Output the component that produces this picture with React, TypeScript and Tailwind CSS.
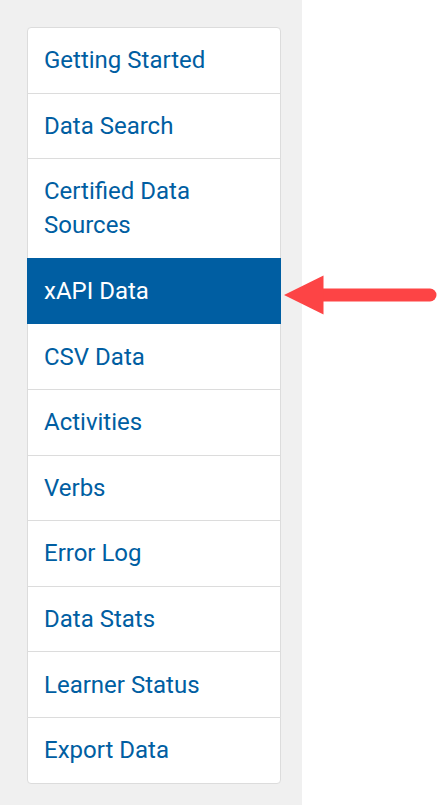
import React from "react";

const ITEMS = [
  "Getting Started",
  "Data Search",
  "Certified Data Sources",
  "xAPI Data",
  "CSV Data",
  "Activities",
  "Verbs",
  "Error Log",
  "Data Stats",
  "Learner Status",
  "Export Data",
];

const ACTIVE = "xAPI Data";

export default function App() {
  return (
    <div className="relative flex min-h-[805px] bg-white" style={{ fontFamily: "Roboto, 'Liberation Sans', sans-serif" }}>
      <aside className="w-[302px] shrink-0 bg-[#f0f0f0] pt-[27px] pl-[27px] pr-[21px] pb-6">
        <nav className="flex flex-col">
          {ITEMS.map((label, i) => (
            <NavItem key={label} label={label} active={label === ACTIVE} first={i === 0} last={i === ITEMS.length - 1} />
          ))}
        </nav>
      </aside>
      <div className="flex-1" />

      {/* annotation arrow pointing at the active item */}
      <svg className="pointer-events-none absolute left-0 top-0" width="438" height="805" viewBox="0 0 438 805">
        <line x1="318" y1="295" x2="430" y2="295" stroke="#fd4445" strokeWidth="13" strokeLinecap="round" />
        <polygon points="284,295 323.5,275.5 323.5,314.5" fill="#fd4445" />
      </svg>
    </div>
  );
}

function NavItem({ label, active, first, last }: { label: string; active: boolean; first: boolean; last: boolean }) {
  return (
    <a
      href="#"
      className={
        "block border px-4 py-[15.3px] text-[24px] leading-[34px] " +
        (first ? "rounded-t " : "-mt-px ") +
        (last ? "rounded-b " : "") +
        (active ? "relative z-10 border-[#005ea2] bg-[#005ea2] text-white" : "border-[#dcdcdc] bg-white text-[#005ea2]")
      }
    >
      {label}
    </a>
  );
}
